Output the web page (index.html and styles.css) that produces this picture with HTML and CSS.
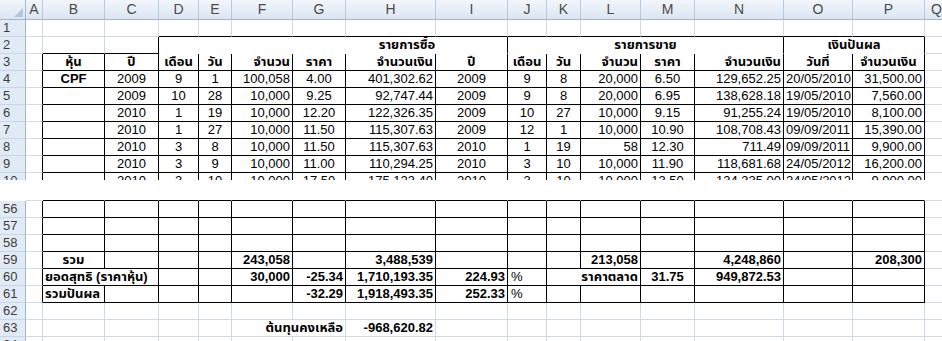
FILE: index.html
```html
<!DOCTYPE html>
<html lang="th">
<head>
    <meta charset="UTF-8">
    <title>CPF</title>
    <link rel="stylesheet" href="styles.css">
</head>
<body>
<div class="sheet">
    <div class="row head">
        <div class="corner"><svg width="9" height="9" viewBox="0 0 9 9"><polygon points="9,0 9,9 0,9" fill="#b4c6dc"/></svg></div>
        <div>A</div><div>B</div><div>C</div><div>D</div><div>E</div><div>F</div><div>G</div><div>H</div><div>I</div><div>J</div><div>K</div><div>L</div><div>M</div><div>N</div><div>O</div><div>P</div><div>Q</div>
    </div>

    <div class="row">
        <div class="rh">1</div>
        <div></div><div></div><div></div>
        <div class="kb"></div><div class="kb"></div><div class="kb"></div><div class="kb"></div><div class="kb"></div><div class="kb"></div>
        <div class="kb"></div><div class="kb"></div><div class="kb"></div><div class="kb"></div><div class="kb"></div><div class="kb"></div><div class="kb"></div>
        <div></div>
    </div>
    <div class="row">
        <div class="rh">2</div>
        <div></div>
        <div class="kb"></div>
        <div class="kb kr"></div>
        <div class="grp s6 buy">รายการซื้อ</div>
        <div class="grp s5">รายการขาย</div>
        <div class="grp s2">เงินปันผล</div>
        <div></div>
    </div>
    <div class="row bold">
        <div class="rh">3</div>
        <div class="kr"></div>
        <div class="k m">หุ้น</div>
        <div class="k m">ปี</div>
        <div class="k m">เดือน</div>
        <div class="k m">วัน</div>
        <div class="k r">จำนวน</div>
        <div class="k m">ราคา</div>
        <div class="k r">จำนวนเงิน</div>
        <div class="k m">ปี</div>
        <div class="k m">เดือน</div>
        <div class="k m">วัน</div>
        <div class="k r">จำนวน</div>
        <div class="k m">ราคา</div>
        <div class="k r">จำนวนเงิน</div>
        <div class="k m">วันที่</div>
        <div class="k m">จำนวนเงิน</div>
        <div></div>
    </div>
    <div class="row">
        <div class="rh">4</div>
        <div class="kr"></div>
        <div class="k m strong">CPF</div>
        <div class="k m">2009</div><div class="k m">9</div><div class="k m">1</div>
        <div class="k r">100,058</div><div class="k m">4.00</div><div class="k r">401,302.62</div>
        <div class="k m">2009</div><div class="k m">9</div><div class="k m">8</div>
        <div class="k r">20,000</div><div class="k m">6.50</div><div class="k r">129,652.25</div>
        <div class="k m">20/05/2010</div><div class="k r">31,500.00</div>
        <div></div>
    </div>
    <div class="row">
        <div class="rh">5</div>
        <div class="kr"></div>
        <div class="k"></div>
        <div class="k m">2009</div><div class="k m">10</div><div class="k m">28</div>
        <div class="k r">10,000</div><div class="k m">9.25</div><div class="k r">92,747.44</div>
        <div class="k m">2009</div><div class="k m">9</div><div class="k m">8</div>
        <div class="k r">20,000</div><div class="k m">6.95</div><div class="k r">138,628.18</div>
        <div class="k m">19/05/2010</div><div class="k r">7,560.00</div>
        <div></div>
    </div>
    <div class="row">
        <div class="rh">6</div>
        <div class="kr"></div>
        <div class="k"></div>
        <div class="k m">2010</div><div class="k m">1</div><div class="k m">19</div>
        <div class="k r">10,000</div><div class="k m">12.20</div><div class="k r">122,326.35</div>
        <div class="k m">2009</div><div class="k m">10</div><div class="k m">27</div>
        <div class="k r">10,000</div><div class="k m">9.15</div><div class="k r">91,255.24</div>
        <div class="k m">19/05/2010</div><div class="k r">8,100.00</div>
        <div></div>
    </div>
    <div class="row">
        <div class="rh">7</div>
        <div class="kr"></div>
        <div class="k"></div>
        <div class="k m">2010</div><div class="k m">1</div><div class="k m">27</div>
        <div class="k r">10,000</div><div class="k m">11.50</div><div class="k r">115,307.63</div>
        <div class="k m">2009</div><div class="k m">12</div><div class="k m">1</div>
        <div class="k r">10,000</div><div class="k m">10.90</div><div class="k r">108,708.43</div>
        <div class="k m">09/09/2011</div><div class="k r">15,390.00</div>
        <div></div>
    </div>
    <div class="row">
        <div class="rh">8</div>
        <div class="kr"></div>
        <div class="k"></div>
        <div class="k m">2010</div><div class="k m">3</div><div class="k m">8</div>
        <div class="k r">10,000</div><div class="k m">11.50</div><div class="k r">115,307.63</div>
        <div class="k m">2010</div><div class="k m">1</div><div class="k m">19</div>
        <div class="k r">58</div><div class="k m">12.30</div><div class="k r">711.49</div>
        <div class="k m">09/09/2011</div><div class="k r">9,900.00</div>
        <div></div>
    </div>
    <div class="row">
        <div class="rh">9</div>
        <div class="kr"></div>
        <div class="k"></div>
        <div class="k m">2010</div><div class="k m">3</div><div class="k m">9</div>
        <div class="k r">10,000</div><div class="k m">11.00</div><div class="k r">110,294.25</div>
        <div class="k m">2010</div><div class="k m">3</div><div class="k m">10</div>
        <div class="k r">10,000</div><div class="k m">11.90</div><div class="k r">118,681.68</div>
        <div class="k m">24/05/2012</div><div class="k r">16,200.00</div>
        <div></div>
    </div>
    <div class="cut">
        <div class="row">
            <div class="rh">10</div>
            <div class="kr"></div>
            <div class="k"></div>
            <div class="k m">2010</div><div class="k m">3</div><div class="k m">10</div>
            <div class="k r">10,000</div><div class="k m">17.50</div><div class="k r">175,123.40</div>
            <div class="k m">2010</div><div class="k m">3</div><div class="k m">10</div>
            <div class="k r">10,000</div><div class="k m">13.50</div><div class="k r">134,335.00</div>
            <div class="k m">24/05/2012</div><div class="k r">9,900.00</div>
            <div></div>
        </div>
    </div>

    <div class="row gap">
        <div></div><div class="gg"></div>
        <div class="gk"></div><div class="gk"></div><div class="gk"></div><div class="gk"></div><div class="gk"></div><div class="gk"></div><div class="gk"></div><div class="gk"></div>
        <div class="gk"></div><div class="gk"></div><div class="gk"></div><div class="gk"></div><div class="gk"></div><div class="gk"></div><div class="gk"></div>
        <div class="gg"></div>
    </div>

    <div class="row">
        <div class="rh">56</div>
        <div class="kr"></div>
        <div class="k"></div><div class="k"></div><div class="k"></div><div class="k"></div><div class="k"></div><div class="k"></div><div class="k"></div><div class="k"></div>
        <div class="k"></div><div class="k"></div><div class="k"></div><div class="k"></div><div class="k"></div><div class="k"></div><div class="k"></div>
        <div></div>
    </div>
    <div class="row">
        <div class="rh">57</div>
        <div class="kr"></div>
        <div class="k"></div><div class="k"></div><div class="k"></div><div class="k"></div><div class="k"></div><div class="k"></div><div class="k"></div><div class="k"></div>
        <div class="k"></div><div class="k"></div><div class="k"></div><div class="k"></div><div class="k"></div><div class="k"></div><div class="k"></div>
        <div></div>
    </div>
    <div class="row">
        <div class="rh">58</div>
        <div class="kr"></div>
        <div class="k"></div><div class="k"></div><div class="k"></div><div class="k"></div><div class="k"></div><div class="k"></div><div class="k"></div><div class="k"></div>
        <div class="k"></div><div class="k"></div><div class="k"></div><div class="k"></div><div class="k"></div><div class="k"></div><div class="k"></div>
        <div></div>
    </div>
    <div class="row bold">
        <div class="rh">59</div>
        <div class="kr"></div>
        <div class="k m">รวม</div>
        <div class="k"></div><div class="k"></div><div class="k"></div>
        <div class="k r">243,058</div><div class="k"></div><div class="k r">3,488,539</div>
        <div class="k"></div><div class="k"></div><div class="k"></div>
        <div class="k r">213,058</div><div class="k"></div><div class="k r">4,248,860</div>
        <div class="k"></div><div class="k r">208,300</div>
        <div></div>
    </div>
    <div class="row bold">
        <div class="rh">60</div>
        <div class="kr"></div>
        <div class="k s2">ยอดสุทธิ (ราคาหุ้น)</div>
        <div class="k"></div><div class="k"></div>
        <div class="k r">30,000</div><div class="k r">-25.34</div><div class="k r">1,710,193.35</div>
        <div class="k r">224.93</div><div class="k pct">%</div>
        <div class="k s2 r">ราคาตลาด</div>
        <div class="k m">31.75</div><div class="k r">949,872.53</div>
        <div class="k"></div><div class="k"></div>
        <div></div>
    </div>
    <div class="row bold">
        <div class="rh">61</div>
        <div class="kr"></div>
        <div class="k">รวมปันผล</div>
        <div class="k"></div><div class="k"></div><div class="k"></div><div class="k"></div>
        <div class="k r">-32.29</div><div class="k r">1,918,493.35</div>
        <div class="k r">252.33</div><div class="k pct">%</div>
        <div class="k"></div><div class="k"></div><div class="k"></div><div class="k"></div><div class="k"></div><div class="k"></div>
        <div></div>
    </div>
    <div class="row">
        <div class="rh">62</div>
        <div></div><div></div><div></div><div></div><div></div><div></div><div></div><div></div><div></div>
        <div></div><div></div><div></div><div></div><div></div><div></div><div></div><div></div>
    </div>
    <div class="row bold">
        <div class="rh">63</div>
        <div></div><div></div><div></div><div></div><div></div>
        <div class="s2 r">ต้นทุนคงเหลือ</div>
        <div class="r">-968,620.82</div>
        <div></div><div></div><div></div><div></div><div></div><div></div><div></div><div></div><div></div>
    </div>
    <div class="row">
        <div class="rh">64</div>
        <div></div><div></div><div></div><div></div><div></div><div></div><div></div><div></div><div></div>
        <div></div><div></div><div></div><div></div><div></div><div></div><div></div><div></div>
    </div>
</div>
</body>
</html>
```

FILE: styles.css
```css
body {
    margin: 0;
    background: #fff;
    color: #000;
    font-family: "Liberation Sans", Arial, Tahoma, "Noto Sans Thai", sans-serif;
    font-size: 13px;
    overflow: hidden;
    height: 341px;
}

.sheet {
    width: 949px;
}

.row {
    display: grid;
    grid-template-columns: 26px 17px 62px 54px 40px 33px 61px 53px 90px 72px 39px 34px 60px 54px 89px 69px 72px 24px;
    height: 17px;
}

.row > div {
    box-sizing: border-box;
    border-right: 1px solid #d0d7e5;
    border-bottom: 1px solid #d0d7e5;
    line-height: 16px;
    padding: 0 2px;
    white-space: nowrap;
    overflow: hidden;
}

/* column letters */
.head {
    height: 20px;
}

.head > div {
    background: linear-gradient(#f2f6fb, #dbe5f2);
    border-right-color: #b7c9de;
    border-bottom-color: #9eb6ce;
    color: #4a4a4a;
    font-size: 14px;
    line-height: 19px;
    text-align: center;
}

.head > .corner {
    display: flex;
    justify-content: flex-end;
    align-items: flex-end;
    padding: 0 2px 2px 0;
    border-right-color: #9eb6ce;
}

/* row numbers */
.row > .rh {
    background: #e2eaf5;
    border-right-color: #9eb6ce;
    border-bottom-color: #c6d5e8;
    color: #3d3d3d;
    font-weight: normal;
    padding-left: 3px;
}

/* black outline of the table */
.row > .k {
    border-right-color: #000;
    border-bottom-color: #000;
}

.row > .kr {
    border-right-color: #000;
}

.row > .kb {
    border-bottom-color: #000;
}

.row > .grp {
    border-right-color: #000;
    border-bottom-color: #fff;
    text-align: center;
    font-weight: bold;
}

.row > .buy {
    padding-left: 150px;
}

.s2 { grid-column: span 2; }
.s5 { grid-column: span 5; }
.s6 { grid-column: span 6; }

.r { text-align: right; }
.m { text-align: center; }
.bold { font-weight: bold; }
.strong { font-weight: bold; }

.row > .pct {
    padding-left: 3px;
    font-weight: normal;
}

/* part of row 10 shown above the split */
.cut {
    height: 7px;
    overflow: hidden;
}

.gap {
    height: 21px;
}

.gap > div {
    border-right-color: #fff !important;
    border-bottom-color: #fff;
}

.gap > .gk {
    border-bottom-color: #000;
}

.gap > .gg {
    border-bottom-color: #d0d7e5;
}
```
